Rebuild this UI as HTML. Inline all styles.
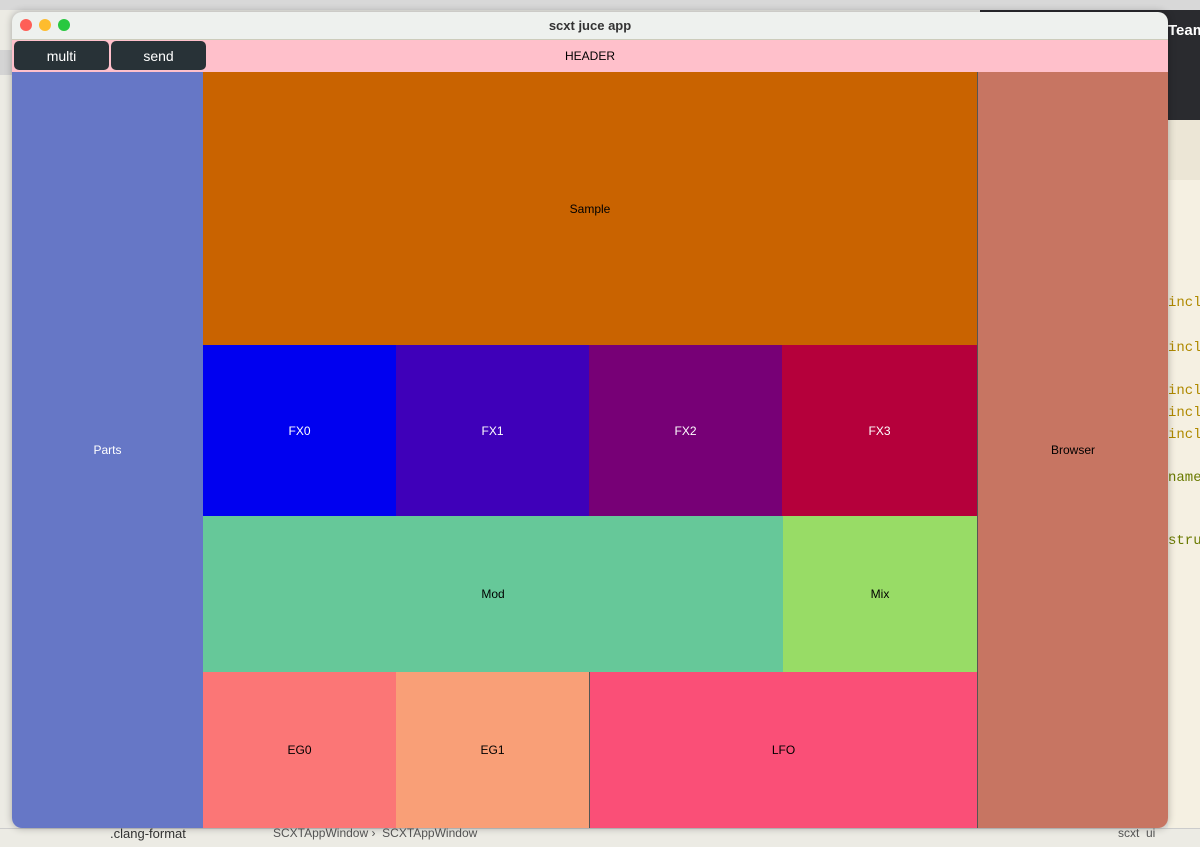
<!DOCTYPE html>
<html><head><style>
*{margin:0;padding:0;box-sizing:border-box}
body{width:1200px;height:847px;overflow:hidden;background:#ecebe6;font-family:"Liberation Sans",sans-serif;position:relative}
.a{position:absolute}
.c{display:flex;align-items:center;justify-content:center;font-size:12px}
.m{font-family:"Liberation Mono",monospace;font-size:14px;color:#b08a00}
</style></head><body>
<div class="a" style="left:0;top:0;width:1200px;height:10px;background:#d8d8d8"></div>
<div class="a" style="left:0;top:10px;width:12px;height:837px;background:#ecebe4"></div>
<div class="a" style="left:0;top:50px;width:12px;height:25px;background:#d4d4d4"></div>
<div class="a" style="left:980px;top:10px;width:220px;height:110px;background:#2a2b2f"></div>
<div class="a" style="left:1168px;top:22px;color:#fff;font-size:15px;font-weight:bold">Team</div>
<div class="a" style="left:1168px;top:120px;width:32px;height:60px;background:#ece6d6"></div>
<div class="a" style="left:1168px;top:180px;width:32px;height:667px;background:#f5f0e2"></div>
<div class="a m" style="left:1168px;top:295px">incl</div>
<div class="a m" style="left:1168px;top:340px">incl</div>
<div class="a m" style="left:1168px;top:383px">incl</div>
<div class="a m" style="left:1168px;top:405px">incl</div>
<div class="a m" style="left:1168px;top:427px">incl</div>
<div class="a m" style="left:1168px;top:470px;color:#6a7a00">names</div>
<div class="a m" style="left:1168px;top:533px;color:#6a7a00">struc</div>
<div class="a" style="left:0;top:828px;width:1200px;height:19px;background:#ecebe4;border-top:1px solid #ccc"></div>
<div class="a" style="left:110px;top:826px;font-size:13px;color:#333">.clang-format</div>
<div class="a" style="left:273px;top:826px;font-size:12px;color:#555">SCXTAppWindow › &nbsp;SCXTAppWindow</div>
<div class="a" style="left:1118px;top:826px;font-size:12px;color:#555">scxt &nbsp;ui</div>

<div class="a" style="left:12px;top:12px;width:1156px;height:816px;border-radius:10px;overflow:hidden;background:#eef1ee;box-shadow:0 0 8px rgba(0,0,0,.3)">
  <div class="a" style="left:8px;top:7px;width:12px;height:12px;border-radius:50%;background:#fe5f57"></div>
  <div class="a" style="left:27px;top:7px;width:12px;height:12px;border-radius:50%;background:#febc2e"></div>
  <div class="a" style="left:46px;top:7px;width:12px;height:12px;border-radius:50%;background:#28c840"></div>
  <div class="a c" style="left:0;top:0;width:1156px;height:27px;font-size:13px;font-weight:bold;color:#333">scxt juce app</div>
  <div class="a c" style="left:0;top:27px;width:1156px;height:33px;background:#ffc0cb;border-top:1px solid #ccb">HEADER</div>
  <div class="a c" style="left:2px;top:29px;width:95px;height:29px;background:#283237;border-radius:5px;color:#fff;font-size:14px">multi</div>
  <div class="a c" style="left:99px;top:29px;width:95px;height:29px;background:#283237;border-radius:5px;color:#fff;font-size:14px">send</div>
  <div class="a c" style="left:0;top:60px;width:191px;height:756px;background:#6677c6;color:#fff">Parts</div>
  <div class="a c" style="left:191px;top:60px;width:774px;height:273px;background:#c96300">Sample</div>
  <div class="a c" style="left:191px;top:333px;width:193px;height:171px;background:#0000f0;color:#fff">FX0</div>
  <div class="a c" style="left:384px;top:333px;width:193px;height:171px;background:#3f00b9;color:#fff">FX1</div>
  <div class="a c" style="left:577px;top:333px;width:193px;height:171px;background:#770076;color:#fff">FX2</div>
  <div class="a c" style="left:770px;top:333px;width:195px;height:171px;background:#b5003b;color:#fff">FX3</div>
  <div class="a c" style="left:191px;top:504px;width:580px;height:156px;background:#66c899">Mod</div>
  <div class="a c" style="left:771px;top:504px;width:194px;height:156px;background:#98dc66">Mix</div>
  <div class="a c" style="left:191px;top:660px;width:193px;height:156px;background:#fb7676">EG0</div>
  <div class="a c" style="left:384px;top:660px;width:193px;height:156px;background:#f99f77">EG1</div>
  <div class="a c" style="left:577px;top:660px;width:388px;height:156px;background:#fa4f77;border-left:1px solid #555">LFO</div>
  <div class="a c" style="left:965px;top:60px;width:191px;height:756px;background:#c77562;border-left:1px solid #555">Browser</div>
</div>
</body></html>
